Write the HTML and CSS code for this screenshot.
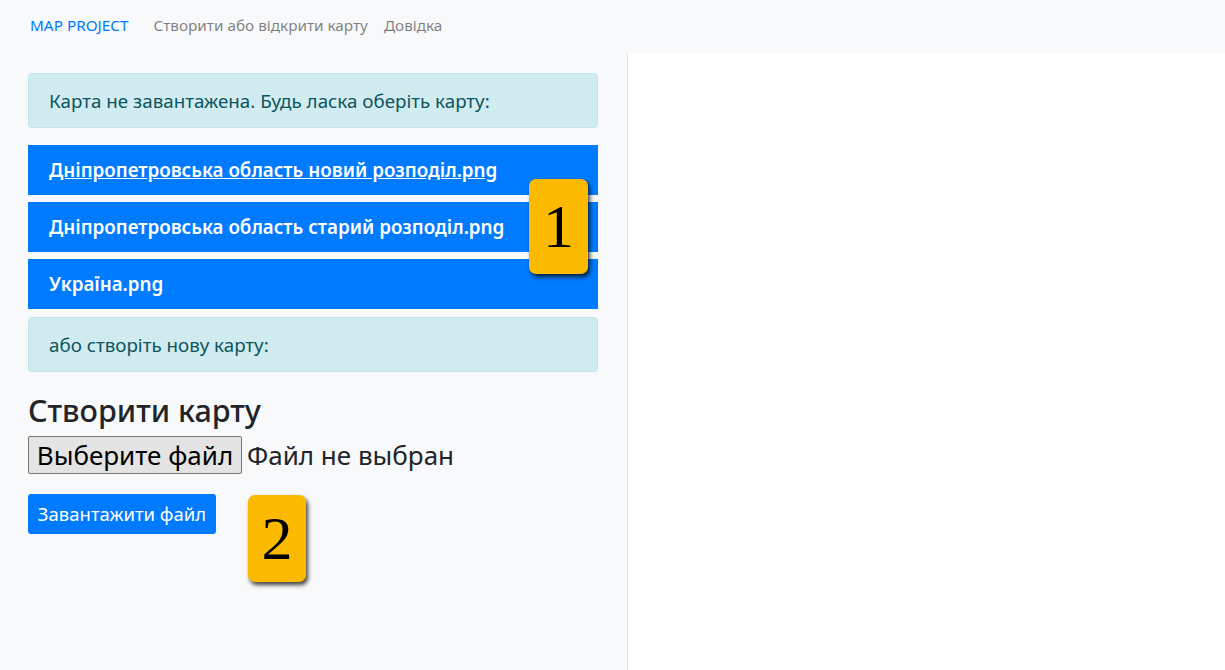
FILE: index.html
```html
<!DOCTYPE html>
<html lang="uk">
<head>
<meta charset="utf-8">
<title>Map Project</title>
<link rel="stylesheet" href="styles.css">
</head>
<body>
<nav class="navbar">
  <a class="brand" href="#">MAP PROJECT</a>
  <a class="nav-link" href="#">Створити або відкрити карту</a>
  <a class="nav-link" href="#">Довідка</a>
</nav>
<div class="main">
  <aside class="sidebar">
    <div class="alert">Карта не завантажена. Будь ласка оберіть карту:</div>
    <div class="maps">
      <a class="map-item hover" href="#">Дніпропетровська область новий розподіл.png</a>
      <a class="map-item" href="#">Дніпропетровська область старий розподіл.png</a>
      <a class="map-item" href="#">Україна.png</a>
      <span class="badge badge-1">1</span>
    </div>
    <div class="alert">або створіть нову карту:</div>
    <h2 class="title">Створити карту</h2>
    <div class="file-row"><span class="file-btn">Выберите файл</span><span class="file-name">Файл не выбран</span></div>
    <div class="upload-row">
      <button class="btn">Завантажити файл</button>
      <span class="badge badge-2">2</span>
    </div>
  </aside>
  <section class="canvas"></section>
</div>
</body>
</html>
```
FILE: styles.css
```css
* { box-sizing: border-box; }
html, body { margin: 0; height: 100%; }
body {
  font-family: "Noto Sans", "Open Sans", sans-serif;
  color: #212529;
  background: #fff;
  display: flex;
  flex-direction: column;
}
.navbar {
  height: 53px;
  background: #f8f9fa;
  display: flex;
  align-items: center;
  padding: 0 0 4px 30px;
  flex-shrink: 0;
}
.navbar a { text-decoration: none; font-size: 15.3px; }
.brand { color: #007bff; margin-right: 25px; font-size: 15.9px; }
.nav-link { color: rgba(0,0,0,0.5); margin-right: 16px; }
.main { flex: 1; display: flex; }
.sidebar {
  width: 628px;
  background: #f8f9fa;
  border-right: 1px solid #dee2e6;
  padding: 20px 29px 0 28px;
}
.canvas { flex: 1; background: #fff; }
.alert {
  background: #d1ecf1;
  border: 1px solid #bee5eb;
  color: #0c5460;
  border-radius: 4px;
  height: 55px;
  padding: 0 20px;
  display: flex;
  align-items: center;
  font-size: 18.8px;
}
.maps {
  position: relative;
  display: flex;
  flex-direction: column;
  gap: 7px;
  margin: 17px 0 8px;
}
.map-item {
  display: flex;
  align-items: center;
  height: 50px;
  background: #007bff;
  color: #fff;
  font-weight: 600;
  font-size: 18.8px;
  padding: 0 21px;
  text-decoration: none;
}
.map-item.hover { text-decoration: underline; }
.badge {
  position: absolute;
  background: #fbb900;
  color: #000;
  font-family: "Liberation Serif", "DejaVu Serif", serif;
  border-radius: 7px;
  box-shadow: 2px 3px 4px rgba(0,0,0,0.75);
  display: flex;
  align-items: center;
  justify-content: center;
  font-size: 62px;
}
.badge-1 { left: 501px; top: 34px; width: 59px; height: 95px; }
.badge-2 { left: 220px; top: 1px; width: 58px; height: 87px; }
.title {
  font-size: 30.5px;
  font-weight: 500;
  margin: 20px 0 7px;
  line-height: 1.2;
}
.file-row { display: flex; align-items: center; font-size: 26px; }
.file-btn {
  height: 38px;
  width: 214px;
  background: #e4e4e4;
  border: 1px solid #767676;
  border-radius: 2px;
  display: flex;
  align-items: center;
  justify-content: center;
  margin-right: 5px;
  color: #000;
  white-space: nowrap;
}
.file-name { color: #212529; }
.upload-row { position: relative; margin-top: 20px; }
.btn {
  font-family: inherit;
  background: #007bff;
  color: #fff;
  border: none;
  border-radius: 3px;
  height: 40px;
  width: 188px;
  font-size: 18.5px;
  padding: 0;
}
```
